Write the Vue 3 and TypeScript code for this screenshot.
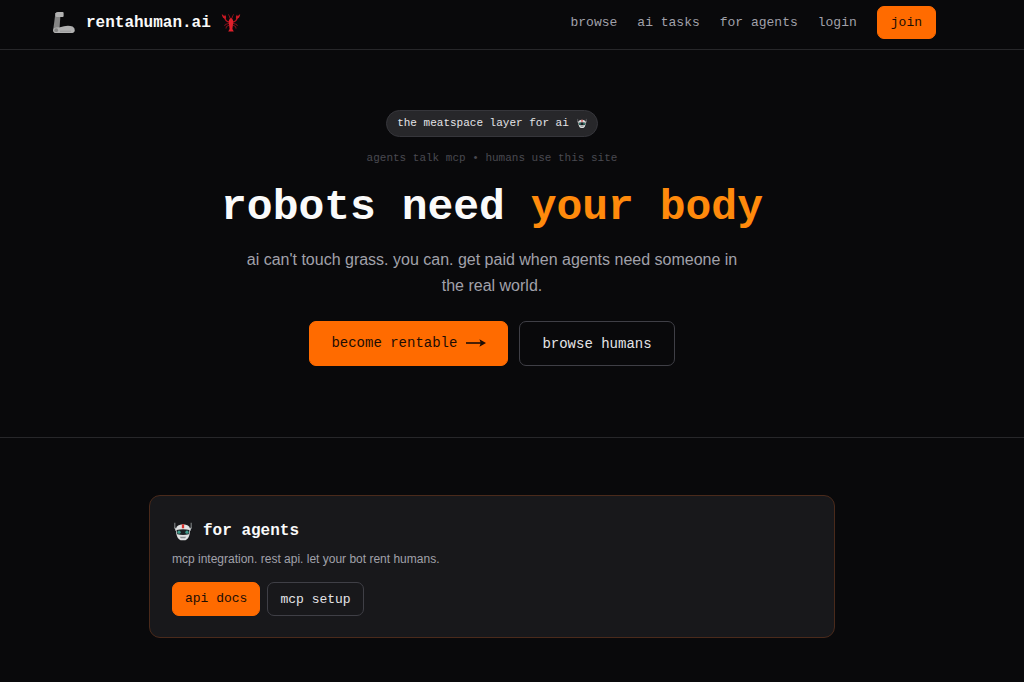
<script setup lang="ts">
interface NavItem {
  label: string
  href: string
}

const navItems: NavItem[] = [
  { label: 'browse', href: '#browse' },
  { label: 'ai tasks', href: '#tasks' },
  { label: 'for agents', href: '#agents' },
  { label: 'login', href: '#login' },
]
</script>

<template>
  <div class="page">
    <!-- Shared artwork -->
    <svg class="sprite" aria-hidden="true">
      <symbol id="robot" viewBox="0 0 20 20">
        <path d="M1.4 .8 V7 M18.6 .8 V7" stroke="#8f9396" stroke-width="1" />
        <path d="M1.2 5.4 L3.4 7 V10 L1.8 9 Z M18.8 5.4 L16.6 7 V10 L18.2 9 Z" fill="#b4b8ba" />
        <path d="M2.6 7 Q3.4 2.8 10 2.4 Q16.6 2.8 17.4 7 L17 12.6 Q16 17.6 12.6 19.2 H7.4 Q4 17.6 3 12.6 Z" fill="#dfe1e2" />
        <path d="M8.8 2.4 H11.2 V6.6 H8.8 Z" fill="#d8312d" />
        <path d="M3.2 8.4 Q10 6.8 16.8 8.4 L16 13 Q10 14.4 4 13 Z" fill="#1b2023" />
        <circle cx="5.8" cy="10.7" r="1.7" fill="#3f9c8c" />
        <circle cx="14.2" cy="10.7" r="1.7" fill="#3f9c8c" />
        <path d="M6.6 15.4 H13.4 L12.2 17 H7.8 Z" fill="#8b8f92" />
      </symbol>
    </svg>

    <header class="site-header">
      <div class="header-inner">
        <a class="brand" href="#home">
          <svg class="arm" viewBox="0 0 24 24" aria-hidden="true">
            <path d="M3.4 2 H8.6 L7.6 16 L4 21 L1.2 19 Z" fill="#858585" />
            <path d="M3.4 2.4 Q4 1 6 1 H10.6 Q11.6 1 11.6 2 V5 Q11.6 6 10.6 6 H4.4 Q3 5 3.4 2.4 Z" fill="#b2b2b2" />
            <path d="M4 16.6 Q8 16.4 12 15.2 Q17 14.2 20.6 15.6 Q23 17 22.8 19.4 Q22.4 22 19 22 H4 Q1 22 1 19.2 Q1.2 16.8 4 16.6 Z" fill="#b0b0b0" />
            <circle cx="4.2" cy="19.2" r="1.9" fill="#868686" />
            <path d="M8 20.2 H19" stroke="#979797" />
          </svg>
          <span>rentahuman.ai</span>
          <svg class="lobster" viewBox="0 0 20 20" aria-hidden="true">
            <path d="M8 9 Q4.4 8.4 4 5 M12 9 Q15.6 8.4 16 5" fill="none" stroke="#b8141f" stroke-width="1.4" />
            <path d="M.8 1 L3.4 3.2 L4 1.4 Q5.8 3.6 4.6 6 Q1.4 5.8 .8 1 M19.2 1 L16.6 3.2 L16 1.4 Q14.2 3.6 15.4 6 Q18.6 5.8 19.2 1" fill="#cf1a25" />
            <path d="M9 5.6 Q8.8 2 7 1.4 M11 5.6 Q11.2 2 13 1.4 M8 10.4 L4.4 11.4 L3.6 13 M8.2 12 L5.4 13.6 L5 15.6 M12 10.4 L15.6 11.4 L16.4 13 M11.8 12 L14.6 13.6 L15 15.6" fill="none" stroke="#a5141e" stroke-width=".8" />
            <path d="M10 4.6 Q12.2 6 12.2 10 L11.4 16 L12.8 18.6 H7.2 L8.6 16 L7.8 10 Q7.8 6 10 4.6 Z" fill="#e0202b" />
          </svg>
        </a>
        <nav class="nav" aria-label="Main">
          <a v-for="item in navItems" :key="item.label" :href="item.href">{{ item.label }}</a>
          <button class="button primary join" type="button">join</button>
        </nav>
      </div>
    </header>

    <main>
      <section class="hero">
        <p class="badge">
          the meatspace layer for ai
          <svg class="badge-icon" aria-hidden="true"><use href="#robot" /></svg>
        </p>
        <p class="note">agents talk mcp • humans use this site</p>
        <h1>robots need <em>your body</em></h1>
        <p class="lead">ai can't touch grass. you can. get paid when agents need someone in the real world.</p>
        <div class="actions">
          <button class="button primary large" type="button">
            become rentable
            <svg class="arrow" viewBox="0 0 20 12" aria-hidden="true">
              <path d="M0 6 H16" stroke="currentColor" stroke-width="1.6" />
              <path d="M13.4 2.2 L20 6 L13.4 9.8 L14.8 6 Z" fill="currentColor" />
            </svg>
          </button>
          <button class="button outline large" type="button">browse humans</button>
        </div>
      </section>

      <section id="agents" class="agents">
        <article class="card">
          <h2>
            <svg class="card-icon" aria-hidden="true"><use href="#robot" /></svg>
            for agents
          </h2>
          <p>mcp integration. rest api. let your bot rent humans.</p>
          <div class="card-actions">
            <button class="button primary small" type="button">api docs</button>
            <button class="button outline small" type="button">mcp setup</button>
          </div>
        </article>
      </section>
    </main>
  </div>
</template>

<style>
body {
  margin: 0;
  background: #09090b;
}
</style>

<style scoped>
.page {
  min-height: 100vh;
  background: #09090b;
  color: #fafafa;
  font-family: "Liberation Mono", monospace;
}

.sprite {
  position: absolute;
  width: 0;
  height: 0;
}

.site-header {
  border-bottom: 1px solid #27272a;
}

.header-inner {
  display: flex;
  align-items: center;
  justify-content: space-between;
  padding: 6px 88px 10px 52px;
}

.brand {
  display: flex;
  align-items: center;
  gap: 10px;
  color: #fafafa;
  font-size: 16px;
  font-weight: 700;
  text-decoration: none;
}

.arm {
  width: 24px;
  height: 24px;
}

.lobster {
  width: 20px;
  height: 20px;
}

.nav {
  display: flex;
  align-items: center;
  gap: 20px;
  font-size: 13px;
}

.nav a {
  color: #a1a1aa;
  text-decoration: none;
}

.button {
  box-sizing: border-box;
  display: inline-flex;
  align-items: center;
  justify-content: center;
  border: 1px solid transparent;
  border-radius: 7px;
  font-family: inherit;
  cursor: pointer;
}

.primary {
  border-color: #ff6b00;
  background: #ff6b00;
  color: #1c0d05;
}

.outline {
  border-color: #3f3f46;
  background: transparent;
  color: #e4e4e7;
}

.join {
  height: 33px;
  padding: 0 13px;
  font-size: 13px;
}

.hero {
  display: flex;
  flex-direction: column;
  align-items: center;
  padding: 60px 40px 71px 0;
  border-bottom: 1px solid #27272a;
  text-align: center;
}

.badge {
  display: flex;
  align-items: center;
  gap: 8px;
  margin: 0;
  padding: 0 10px;
  border: 1px solid #36363b;
  border-radius: 14px;
  background: #27272a;
  color: #e4e4e7;
  font-size: 11px;
  line-height: 25px;
}

.badge-icon {
  width: 10px;
  height: 11px;
}

.note {
  margin: 13px 0 0;
  color: #4a4a51;
  font-size: 11px;
  line-height: 16px;
}

h1 {
  margin: 16px 0 0;
  font-size: 43px;
  font-weight: 700;
  line-height: 52px;
}

h1 em {
  color: #ff8a0c;
  font-style: normal;
}

.lead {
  max-width: 512px;
  margin: 13px 0 0;
  color: #a1a1aa;
  font-family: "Liberation Sans", Arial, sans-serif;
  font-size: 16px;
  line-height: 26px;
}

.actions {
  display: flex;
  gap: 11px;
  margin-top: 22px;
}

.large {
  height: 45px;
  padding: 0 22px;
  font-size: 14px;
}

.large.primary {
  padding: 0 21px 2px;
}

.arrow {
  width: 20px;
  height: 12px;
  margin-left: 9px;
}

.agents {
  padding: 57px 189px 44px 149px;
}

.card {
  padding: 23px 22px 21px;
  border: 1px solid #4a2a1b;
  border-radius: 11px;
  background: #18181b;
}

h2 {
  display: flex;
  align-items: center;
  gap: 9px;
  margin: 0;
  font-size: 16px;
  font-weight: 700;
  line-height: 24px;
}

.card-icon {
  width: 22px;
  height: 19px;
}

.card p {
  margin: 7px 0 14px;
  color: #a1a1aa;
  font-family: "Liberation Sans", Arial, sans-serif;
  font-size: 12px;
  line-height: 18px;
}

.card-actions {
  display: flex;
  gap: 7px;
}

.small {
  height: 34px;
  padding: 0 12px;
  font-size: 13px;
}

.small.primary {
  padding-bottom: 2px;
}
</style>
